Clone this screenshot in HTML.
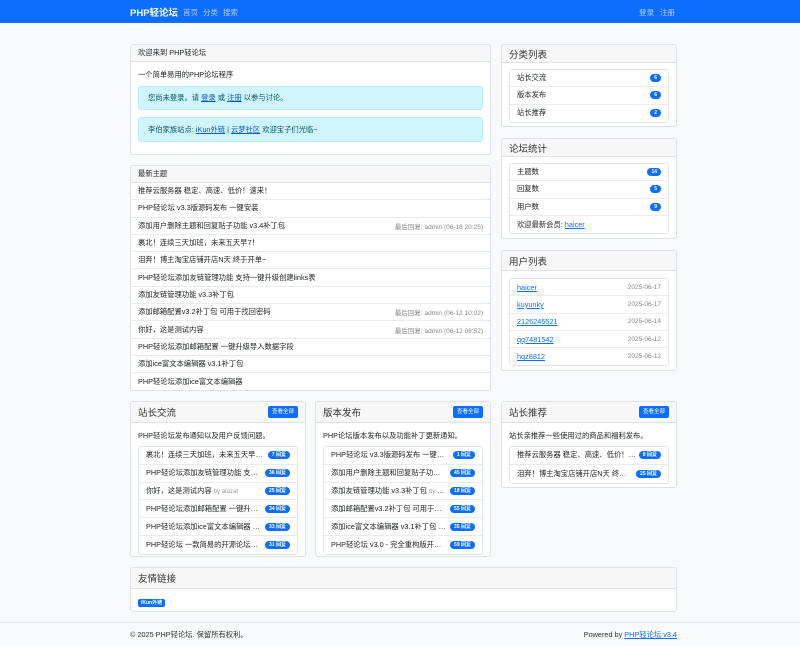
<!DOCTYPE html>
<html><head><meta charset="utf-8"><style>
*{box-sizing:border-box;margin:0;padding:0}
body{width:800px;height:646px;background:#f8f9fa;font-family:"Liberation Sans","Noto Sans CJK SC",sans-serif;font-size:7.3px;color:#212529;position:relative;overflow:hidden}
.nav{position:absolute;left:0;top:0;width:800px;height:23px;background:#0d6efd}
.nav span{position:absolute;top:7px;color:#b3cfff;font-size:7.5px}
.brand{left:130px!important;top:5px!important;color:#fff!important;font-weight:bold;font-size:9.5px!important}
.card{position:absolute;background:#fff;border:1px solid #dfe2e6;border-radius:3px;overflow:hidden}
.ch{background:#f7f7f7;border-bottom:1px solid #dfe2e6;padding:0 7px;display:flex;align-items:center;justify-content:space-between}
.ch.s{font-size:7.3px}.ch.b{font-size:9.5px;color:#333}
.a{color:#0d6efd;text-decoration:underline}
.alert{position:absolute;left:7px;right:7px;background:#cff4fc;border:1px solid #b6effb;border-radius:3px;color:#055160;padding:0 9px;display:flex;align-items:center}
.alert .a{color:#0a58ca}
.row{border-bottom:1px solid #e9ecef;padding:0 7px;display:flex;align-items:center;justify-content:space-between;white-space:nowrap}
.row:last-child{border-bottom:none}
.muted{color:#888;font-size:6.5px}
.lg{position:absolute;border:1px solid #e3e6e9;border-radius:3px;overflow:hidden}
.pill{background:#0d6efd;color:#fff;border-radius:6px;font-size:5px;font-weight:bold;padding:1px 4px;line-height:6px;flex:none}
.btn{background:#0d6efd;color:#fff;font-size:5.5px;border-radius:2px;padding:3px 4px;line-height:6px}
.ell{overflow:hidden;text-overflow:ellipsis;white-space:nowrap;min-width:0;flex:1;margin-right:3px}
.by{color:#999;font-size:6px}
</style></head><body>
<div class="nav"><span class="brand">PHP轻论坛</span><span style="left:183px">首页</span><span style="left:203px">分类</span><span style="left:223px">搜索</span><span style="left:639px">登录</span><span style="left:660px">注册</span></div>

<div class="card" style="left:130px;top:44px;width:361px;height:111px">
<div class="ch s" style="height:17px">欢迎来到 PHP轻论坛</div>
<div style="position:absolute;left:7px;top:25px">一个简单易用的PHP论坛程序</div>
<div class="alert" style="top:41px;height:24px">您尚未登录。请&nbsp;<span class="a">登录</span>&nbsp;或&nbsp;<span class="a">注册</span>&nbsp;以参与讨论。</div>
<div class="alert" style="top:72px;height:25px">李伯家族站点:&nbsp;<span class="a">iKun外链</span>&nbsp;|&nbsp;<span class="a">云梦社区</span>&nbsp;欢迎宝子们光临~</div>
</div>

<div class="card" style="left:130px;top:165px;width:361px;height:226px">
<div class="ch s" style="height:17px">最新主题</div>
<div>
<div class="row" style="height:17.3px">推荐云服务器 稳定、高速、低价！速来！</div>
<div class="row" style="height:17.3px">PHP轻论坛 v3.3版源码发布 一键安装</div>
<div class="row" style="height:17.3px"><span>添加用户删除主题和回复贴子功能 v3.4补丁包</span><span class="muted">最后回复: admin (06-18 20:25)</span></div>
<div class="row" style="height:17.3px">裹北！连续三天加班，未来五天早7！</div>
<div class="row" style="height:17.3px">泪奔！博主淘宝店铺开店N天 终于开单~</div>
<div class="row" style="height:17.3px">PHP轻论坛添加友链管理功能 支持一键升级创建links表</div>
<div class="row" style="height:17.3px">添加友链管理功能 v3.3补丁包</div>
<div class="row" style="height:17.3px"><span>添加邮箱配置v3.2补丁包 可用于找回密码</span><span class="muted">最后回复: admin (06-12 10:02)</span></div>
<div class="row" style="height:17.3px"><span>你好，这是测试内容</span><span class="muted">最后回复: admin (06-12 08:52)</span></div>
<div class="row" style="height:17.3px">PHP轻论坛添加邮箱配置 一键升级导入数据字段</div>
<div class="row" style="height:17.3px">添加ice富文本编辑器 v3.1补丁包</div>
<div class="row" style="height:17.3px">PHP轻论坛添加ice富文本编辑器</div>
</div></div>

<div class="card" style="left:501px;top:44px;width:176px;height:83px">
<div class="ch b" style="height:18px">分类列表</div>
<div class="lg" style="left:7px;right:7px;top:24px">
<div class="row" style="height:17.3px">站长交流<span class="pill">6</span></div>
<div class="row" style="height:17.3px">版本发布<span class="pill">6</span></div>
<div class="row" style="height:17.3px">站长推荐<span class="pill">2</span></div>
</div></div>

<div class="card" style="left:501px;top:138px;width:176px;height:101px">
<div class="ch b" style="height:18px">论坛统计</div>
<div class="lg" style="left:7px;right:7px;top:24px">
<div class="row" style="height:17.3px">主题数<span class="pill">14</span></div>
<div class="row" style="height:17.3px">回复数<span class="pill">5</span></div>
<div class="row" style="height:17.3px">用户数<span class="pill">9</span></div>
<div class="row" style="height:17.3px;justify-content:flex-start">欢迎最新会员:&nbsp;<span class="a">haicer</span></div>
</div></div>

<div class="card" style="left:501px;top:250px;width:176px;height:121px">
<div class="ch b" style="height:20px">用户列表</div>
<div class="lg" style="left:7px;right:7px;top:27px">
<div class="row" style="height:17.3px"><span class="a">haicer</span><span class="muted">2025-06-17</span></div>
<div class="row" style="height:17.3px"><span class="a">kuyunky</span><span class="muted">2025-06-17</span></div>
<div class="row" style="height:17.3px"><span class="a">2126245521</span><span class="muted">2025-06-14</span></div>
<div class="row" style="height:17.3px"><span class="a">qq7481542</span><span class="muted">2025-06-12</span></div>
<div class="row" style="height:17.3px"><span class="a">hqz8812</span><span class="muted">2025-06-12</span></div>
</div></div>

<div class="card" style="left:130px;top:401px;width:176px;height:156px">
<div class="ch b" style="height:21px">站长交流<span class="btn">查看全部</span></div>
<div style="position:absolute;left:7px;top:29px">PHP轻论坛发布通知以及用户反馈问题。</div>
<div class="lg" style="left:7px;right:7px;top:44px">
<div class="row" style="height:17.8px"><span class="ell">裹北！连续三天加班，未来五天早7！ <span class="by">by admin</span></span><span class="pill">7 回复</span></div>
<div class="row" style="height:17.8px"><span class="ell">PHP轻论坛添加友链管理功能 支持一键升级</span><span class="pill">36 回复</span></div>
<div class="row" style="height:17.8px"><span class="ell">你好，这是测试内容 <span class="by">by atazat</span></span><span class="pill">25 回复</span></div>
<div class="row" style="height:17.8px"><span class="ell">PHP轻论坛添加邮箱配置 一键升级导入数据</span><span class="pill">34 回复</span></div>
<div class="row" style="height:17.8px"><span class="ell">PHP轻论坛添加ice富文本编辑器 <span class="by">by admin</span></span><span class="pill">33 回复</span></div>
<div class="row" style="height:17.8px"><span class="ell">PHP轻论坛 一款简易的开源论坛程序发布</span><span class="pill">31 回复</span></div>
</div></div>

<div class="card" style="left:315px;top:401px;width:176px;height:156px">
<div class="ch b" style="height:21px">版本发布<span class="btn">查看全部</span></div>
<div style="position:absolute;left:7px;top:29px">PHP论坛版本发布以及功能补丁更新通知。</div>
<div class="lg" style="left:7px;right:7px;top:44px">
<div class="row" style="height:17.8px"><span class="ell">PHP轻论坛 v3.3版源码发布 一键安装 <span class="by">by admin</span></span><span class="pill">1 回复</span></div>
<div class="row" style="height:17.8px"><span class="ell">添加用户删除主题和回复贴子功能 v3.4补丁包</span><span class="pill">45 回复</span></div>
<div class="row" style="height:17.8px"><span class="ell">添加友链管理功能 v3.3补丁包 <span class="by">by admin</span></span><span class="pill">18 回复</span></div>
<div class="row" style="height:17.8px"><span class="ell">添加邮箱配置v3.2补丁包 可用于找回密码</span><span class="pill">55 回复</span></div>
<div class="row" style="height:17.8px"><span class="ell">添加ice富文本编辑器 v3.1补丁包 <span class="by">by admin</span></span><span class="pill">35 回复</span></div>
<div class="row" style="height:17.8px"><span class="ell">PHP轻论坛 v3.0 - 完全重构版开源 <span class="by">by admin</span></span><span class="pill">59 回复</span></div>
</div></div>

<div class="card" style="left:501px;top:401px;width:176px;height:87px">
<div class="ch b" style="height:21px">站长推荐<span class="btn">查看全部</span></div>
<div style="position:absolute;left:7px;top:29px">站长亲推荐一些使用过的商品和福利发布。</div>
<div class="lg" style="left:7px;right:7px;top:44px">
<div class="row" style="height:17.8px"><span class="ell">推荐云服务器 稳定、高速、低价！速来！</span><span class="pill">8 回复</span></div>
<div class="row" style="height:17.8px"><span class="ell">泪奔！博主淘宝店铺开店N天 终于开单~</span><span class="pill">25 回复</span></div>
</div></div>

<div class="card" style="left:130px;top:567px;width:547px;height:45px">
<div class="ch b" style="height:21px">友情链接</div>
<div style="position:absolute;left:7px;top:29px"><span class="pill" style="border-radius:2px;padding:1px 3px">iKun外链</span></div>
</div>

<div style="position:absolute;left:0;top:622px;width:800px;height:24px;border-top:1px solid #e5e7ea;background:#f8f9fa"></div>
<div style="position:absolute;left:130px;top:630px;color:#333">© 2025 PHP轻论坛. 保留所有权利。</div>
<div style="position:absolute;right:123px;top:630px;color:#333">Powered by <span class="a">PHP轻论坛 v3.4</span></div>
</body></html>
